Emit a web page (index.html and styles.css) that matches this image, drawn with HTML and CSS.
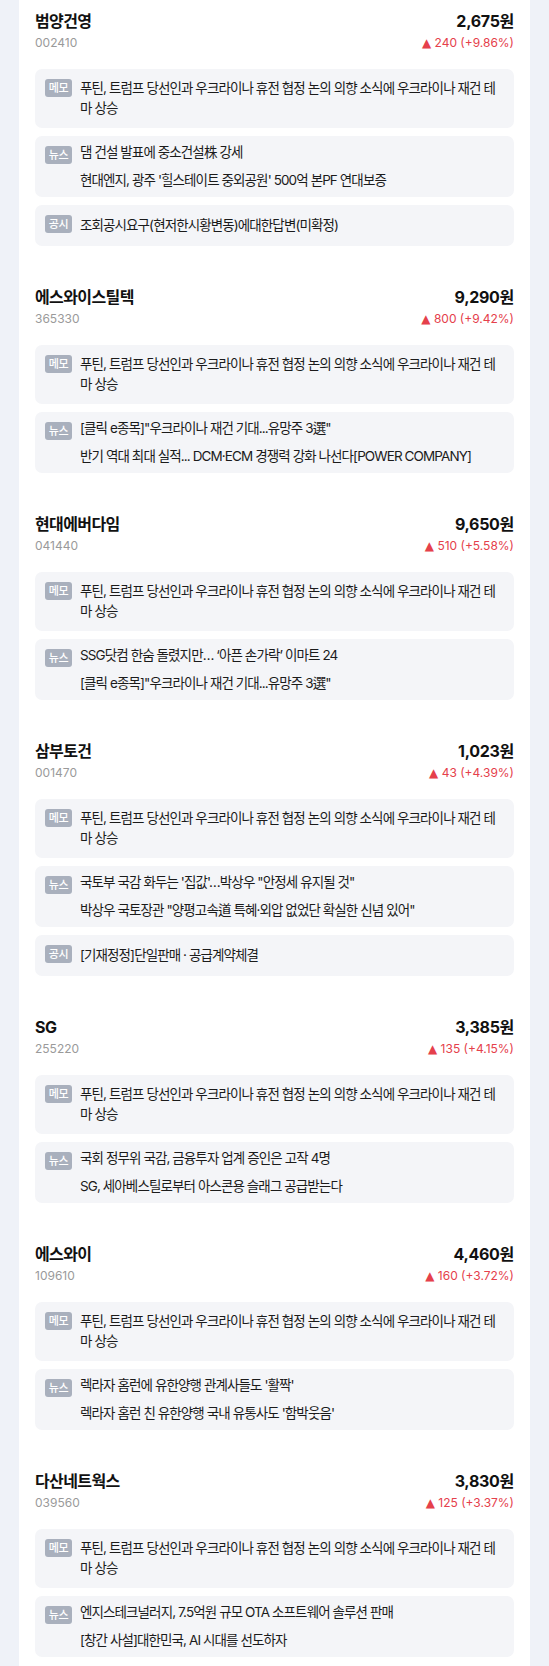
FILE: index.html
```html
<!DOCTYPE html>
<html lang="ko">
<head>
<meta charset="utf-8">
<title>관심 종목</title>
<link rel="stylesheet" href="styles.css">
</head>
<body>
<main class="panel">

<section class="stock">
  <div class="head">
    <div class="left"><div class="name">범양건영</div><div class="code">002410</div></div>
    <div class="right"><div class="price">2,675원</div><div class="chg"><span class="tri">▲</span> 240 (+9.86%)</div></div>
  </div>
  <div class="boxes">
    <div class="box memo"><span class="badge">메모</span><p class="txt">푸틴, 트럼프 당선인과 우크라이나 휴전 협정 논의 의향 소식에 우크라이나 재건 테마 상승</p></div>
    <div class="box news"><span class="badge">뉴스</span><ul class="items"><li>댐 건설 발표에 중소건설株 강세</li><li>현대엔지, 광주 '힐스테이트 중외공원' 500억 본PF 연대보증</li></ul></div>
    <div class="box notice"><span class="badge">공시</span><p class="txt">조회공시요구(현저한시황변동)에대한답변(미확정)</p></div>
  </div>
</section>

<section class="stock">
  <div class="head">
    <div class="left"><div class="name">에스와이스틸텍</div><div class="code">365330</div></div>
    <div class="right"><div class="price">9,290원</div><div class="chg"><span class="tri">▲</span> 800 (+9.42%)</div></div>
  </div>
  <div class="boxes">
    <div class="box memo"><span class="badge">메모</span><p class="txt">푸틴, 트럼프 당선인과 우크라이나 휴전 협정 논의 의향 소식에 우크라이나 재건 테마 상승</p></div>
    <div class="box news"><span class="badge">뉴스</span><ul class="items"><li>[클릭 e종목]"우크라이나 재건 기대...유망주 3選"</li><li>반기 역대 최대 실적... DCM·ECM 경쟁력 강화 나선다[POWER COMPANY]</li></ul></div>
  </div>
</section>

<section class="stock">
  <div class="head">
    <div class="left"><div class="name">현대에버다임</div><div class="code">041440</div></div>
    <div class="right"><div class="price">9,650원</div><div class="chg"><span class="tri">▲</span> 510 (+5.58%)</div></div>
  </div>
  <div class="boxes">
    <div class="box memo"><span class="badge">메모</span><p class="txt">푸틴, 트럼프 당선인과 우크라이나 휴전 협정 논의 의향 소식에 우크라이나 재건 테마 상승</p></div>
    <div class="box news"><span class="badge">뉴스</span><ul class="items"><li>SSG닷컴 한숨 돌렸지만… ‘아픈 손가락’ 이마트 24</li><li>[클릭 e종목]"우크라이나 재건 기대...유망주 3選"</li></ul></div>
  </div>
</section>

<section class="stock">
  <div class="head">
    <div class="left"><div class="name">삼부토건</div><div class="code">001470</div></div>
    <div class="right"><div class="price">1,023원</div><div class="chg"><span class="tri">▲</span> 43 (+4.39%)</div></div>
  </div>
  <div class="boxes">
    <div class="box memo"><span class="badge">메모</span><p class="txt">푸틴, 트럼프 당선인과 우크라이나 휴전 협정 논의 의향 소식에 우크라이나 재건 테마 상승</p></div>
    <div class="box news"><span class="badge">뉴스</span><ul class="items"><li>국토부 국감 화두는 '집값'…박상우 "안정세 유지될 것"</li><li>박상우 국토장관 "양평고속道 특혜·외압 없었단 확실한 신념 있어"</li></ul></div>
    <div class="box notice"><span class="badge">공시</span><p class="txt">[기재정정]단일판매 · 공급계약체결</p></div>
  </div>
</section>

<section class="stock">
  <div class="head">
    <div class="left"><div class="name">SG</div><div class="code">255220</div></div>
    <div class="right"><div class="price">3,385원</div><div class="chg"><span class="tri">▲</span> 135 (+4.15%)</div></div>
  </div>
  <div class="boxes">
    <div class="box memo"><span class="badge">메모</span><p class="txt">푸틴, 트럼프 당선인과 우크라이나 휴전 협정 논의 의향 소식에 우크라이나 재건 테마 상승</p></div>
    <div class="box news"><span class="badge">뉴스</span><ul class="items"><li>국회 정무위 국감, 금융투자 업계 증인은 고작 4명</li><li>SG, 세아베스틸로부터 아스콘용 슬래그 공급받는다</li></ul></div>
  </div>
</section>

<section class="stock">
  <div class="head">
    <div class="left"><div class="name">에스와이</div><div class="code">109610</div></div>
    <div class="right"><div class="price">4,460원</div><div class="chg"><span class="tri">▲</span> 160 (+3.72%)</div></div>
  </div>
  <div class="boxes">
    <div class="box memo"><span class="badge">메모</span><p class="txt">푸틴, 트럼프 당선인과 우크라이나 휴전 협정 논의 의향 소식에 우크라이나 재건 테마 상승</p></div>
    <div class="box news"><span class="badge">뉴스</span><ul class="items"><li>렉라자 홈런에 유한양행 관계사들도 '활짝'</li><li>렉라자 홈런 친 유한양행 국내 유통사도 '함박웃음'</li></ul></div>
  </div>
</section>

<section class="stock">
  <div class="head">
    <div class="left"><div class="name">다산네트웍스</div><div class="code">039560</div></div>
    <div class="right"><div class="price">3,830원</div><div class="chg"><span class="tri">▲</span> 125 (+3.37%)</div></div>
  </div>
  <div class="boxes">
    <div class="box memo"><span class="badge">메모</span><p class="txt">푸틴, 트럼프 당선인과 우크라이나 휴전 협정 논의 의향 소식에 우크라이나 재건 테마 상승</p></div>
    <div class="box news"><span class="badge">뉴스</span><ul class="items"><li>엔지스테크널러지, 7.5억원 규모 OTA 소프트웨어 솔루션 판매</li><li>[창간 사설]대한민국, AI 시대를 선도하자</li></ul></div>
  </div>
</section>

</main>
</body>
</html>
```
FILE: styles.css
```css
* { box-sizing: border-box; }
html, body { margin: 0; padding: 0; }
body {
  background: #eff2f8;
  font-family: "Inter", "Noto Sans CJK KR", sans-serif;
  color: #1b1b1b;
}
.panel {
  background: #ffffff;
  margin: 0 19px;
  padding: 10px 16px 0;
  min-height: 100vh;
}
.stock { padding-bottom: 40px; }
.head {
  display: flex;
  justify-content: space-between;
  align-items: flex-start;
  margin-bottom: 17px;
}
.name, .price {
  font-size: 16px;
  font-weight: 700;
  line-height: 22px;
  color: #111111;
}
.name { letter-spacing: -0.6px; }
.price { letter-spacing: -0.3px; }
.right { text-align: right; }
.code {
  font-size: 12px;
  line-height: 18px;
  margin-top: 2px;
  color: #9a9a9a;
}
.chg {
  font-size: 12px;
  line-height: 18px;
  margin-top: 2px;
  color: #e5404b;
}
.tri { font-family: "DejaVu Sans", sans-serif; font-size: 12px; }
.boxes {
  display: flex;
  flex-direction: column;
  gap: 8px;
}
.box {
  background: #f4f5f8;
  border-radius: 7px;
  display: flex;
  align-items: flex-start;
  gap: 8px;
  padding: 10px 14px 10px 10px;
}
.badge {
  flex: none;
  width: 27px;
  height: 18px;
  border-radius: 3px;
  background: #a9b0bd;
  color: #ffffff;
  font-size: 11px;
  line-height: 18px;
  text-align: center;
  font-weight: 500;
  letter-spacing: -0.3px;
}
.txt {
  margin: 0;
  font-size: 13.5px;
  line-height: 20px;
  letter-spacing: -0.9px;
}
.box.memo { padding: 9px 14px 10px 10px; }
.box.memo .badge { margin-top: 1px; }
.items {
  margin: 0;
  padding: 0;
  list-style: none;
  display: flex;
  flex-direction: column;
  gap: 10px;
  font-size: 13.5px;
  line-height: 18px;
  letter-spacing: -0.9px;
}
.box.news { padding: 7px 14px 8px 10px; }
.box.news .badge { margin-top: 3px; }
.box.notice { padding: 10px 14px 11px 10px; }
```
